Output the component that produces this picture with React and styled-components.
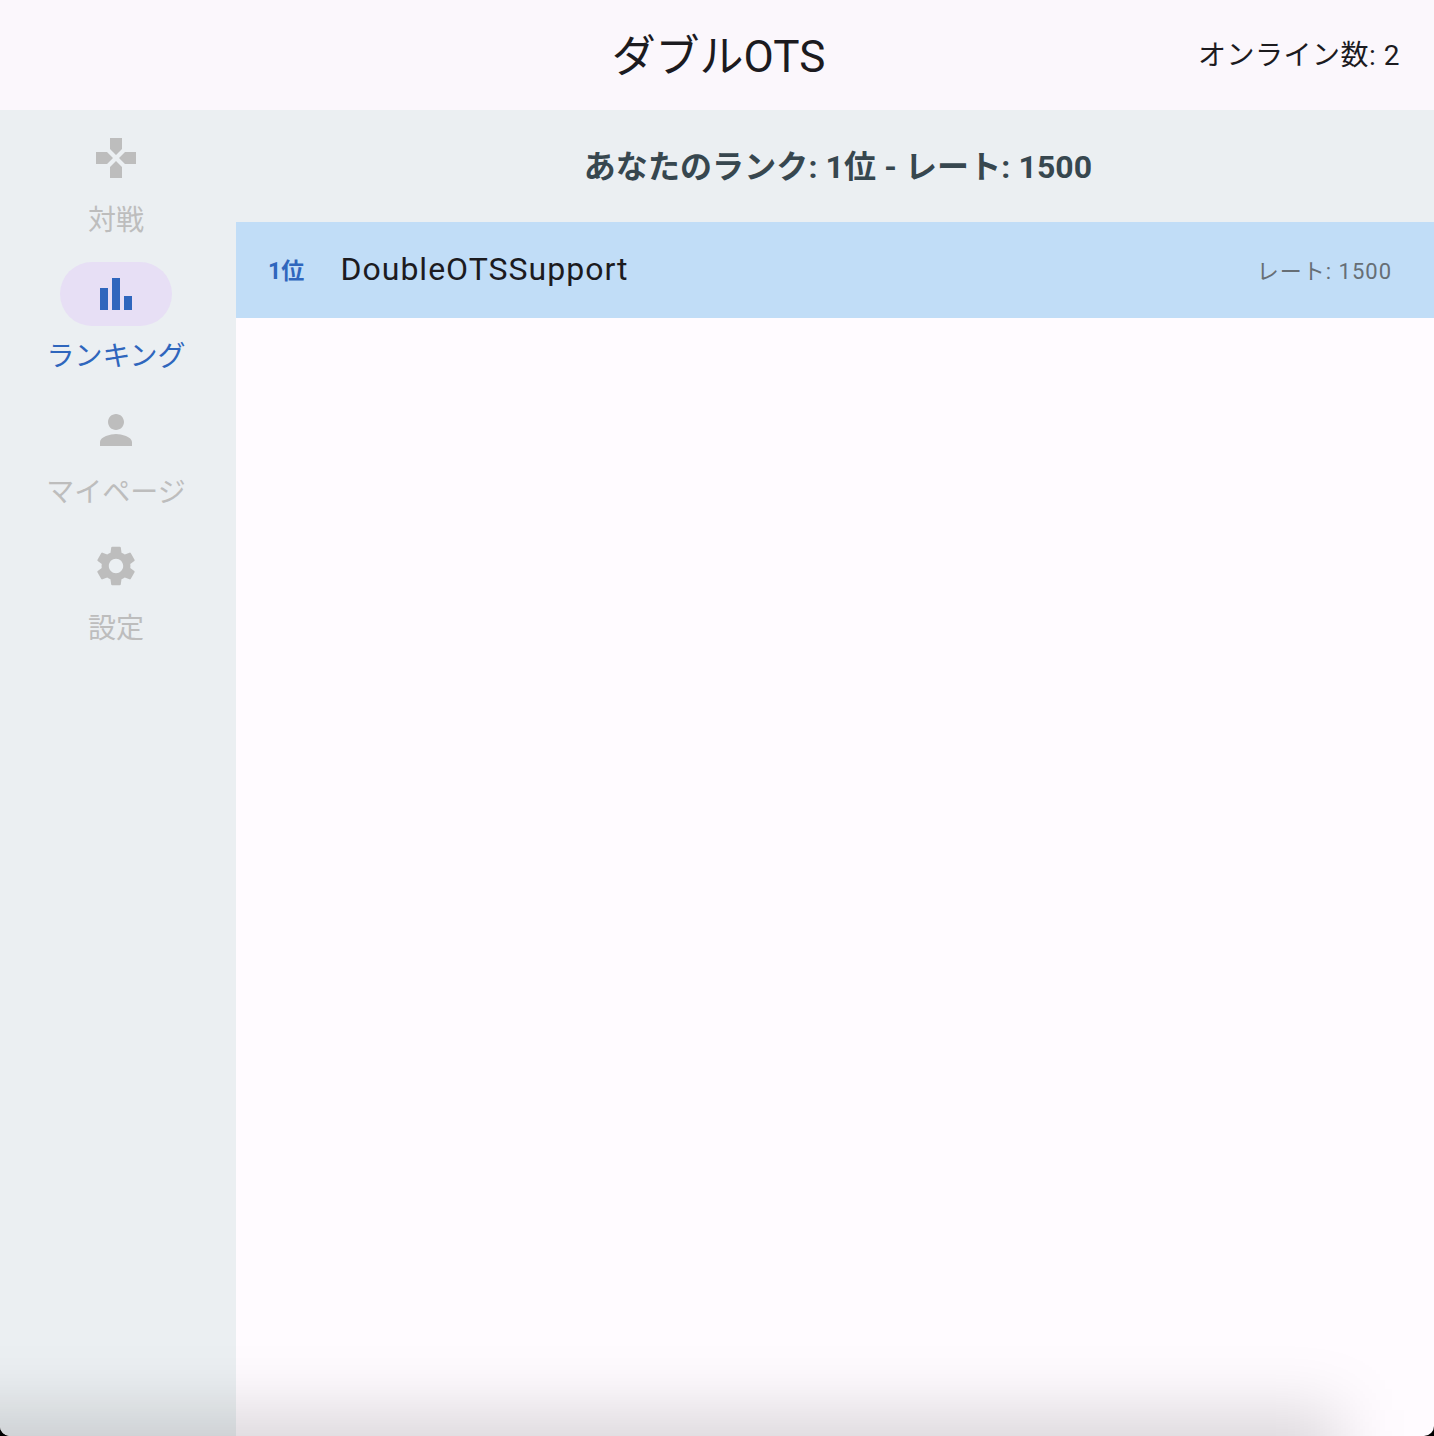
import React from "react";
import styled, { createGlobalStyle } from "styled-components";
import { MdGamepad, MdPerson, MdSettings } from "react-icons/md";

const GlobalStyle = createGlobalStyle`
  html, body {
    margin: 0;
    padding: 0;
    background: #000;
  }
  body {
    font-family: Roboto, "Noto Sans CJK JP", sans-serif;
  }
`;

const Page = styled.div`
  position: relative;
  display: flex;
  flex-direction: column;
  height: 1436px;
  overflow: hidden;
  background: #fffbff;
  border-radius: 0 0 10px 10px;
`;

const Header = styled.header`
  display: grid;
  grid-template-columns: 1fr auto 1fr;
  align-items: center;
  flex: 0 0 110px;
  box-sizing: border-box;
  padding: 0 34px 4px 37px;
  background: #fbf7fc;
  color: #1c1b1f;
`;

const Title = styled.h1`
  grid-column: 2;
  margin: 0;
  font-size: 44px;
  font-weight: 400;
`;

const Online = styled.div`
  grid-column: 3;
  justify-self: end;
  font-size: 28px;
  letter-spacing: 0.5px;
`;

const Body = styled.div`
  display: flex;
  flex: 1;
`;

const Rail = styled.nav`
  display: flex;
  flex-direction: column;
  flex: 0 0 236px;
  box-sizing: border-box;
  padding: 16px 4px 0 0;
  background: #ebeff2;
`;

const NavItem = styled.div`
  display: flex;
  flex-direction: column;
  align-items: center;
  height: 136px;
  color: ${(p) => (p.$active ? "#2f66bd" : "#bdbdbd")};
`;

const Pill = styled.div`
  display: flex;
  align-items: center;
  justify-content: center;
  width: 112px;
  height: 64px;
  border-radius: 32px;
  background: ${(p) => (p.$active ? "#e7dff5" : "transparent")};
  font-size: 48px;
`;

const NavLabel = styled.span`
  margin-top: 10px;
  font-size: 28px;
  line-height: 42px;
`;

const Main = styled.main`
  display: flex;
  flex-direction: column;
  flex: 1;
`;

const MyRank = styled.div`
  display: flex;
  align-items: center;
  justify-content: center;
  box-sizing: border-box;
  height: 112px;
  padding: 0 0 4px 6px;
  background: #ebeff2;
  color: #37474f;
  font-size: 32px;
  font-weight: 700;
  letter-spacing: 0.1px;
`;

const Row = styled.div`
  display: flex;
  align-items: center;
  box-sizing: border-box;
  height: 96px;
  padding: 0 42px 2px 32px;
  background: #c1ddf7;
`;

const Place = styled.span`
  width: 72.5px;
  color: #2f66bd;
  font-size: 23px;
  font-weight: 700;
`;

const Name = styled.span`
  flex: 1;
  color: #1c1b1f;
  font-size: 32px;
  letter-spacing: 1px;
`;

const Rate = styled.span`
  color: #666e75;
  font-size: 22px;
  letter-spacing: 1px;
`;

// soft shadow coming up from below the window, it fades out before the right edge
const BottomShade = styled.div`
  position: absolute;
  left: -120px;
  right: 94px;
  top: 1410px;
  height: 200px;
  pointer-events: none;
  background: rgba(0, 0, 0, 0.14);
  filter: blur(32px);
`;

const BarChart = () => (
  <svg width="48" height="48" viewBox="0 0 24 24" fill="currentColor">
    <path d="M4 9h4v11H4zM10 4h4v16h-4zM16 13h4v7h-4z" />
  </svg>
);

const items = [
  { label: "対戦", icon: <MdGamepad /> },
  { label: "ランキング", icon: <BarChart />, active: true },
  { label: "マイページ", icon: <MdPerson /> },
  { label: "設定", icon: <MdSettings /> },
];

const App = () => {
  return (
    <Page>
      <GlobalStyle />
      <Header>
        <Title>ダブルOTS</Title>
        <Online>オンライン数: 2</Online>
      </Header>
      <Body>
        <Rail>
          {items.map((item) => (
            <NavItem key={item.label} $active={item.active}>
              <Pill $active={item.active}>{item.icon}</Pill>
              <NavLabel>{item.label}</NavLabel>
            </NavItem>
          ))}
        </Rail>
        <Main>
          <MyRank>あなたのランク: 1位 - レート: 1500</MyRank>
          <Row>
            <Place>1位</Place>
            <Name>DoubleOTSSupport</Name>
            <Rate>レート: 1500</Rate>
          </Row>
        </Main>
      </Body>
      <BottomShade />
    </Page>
  );
};

export default App;
